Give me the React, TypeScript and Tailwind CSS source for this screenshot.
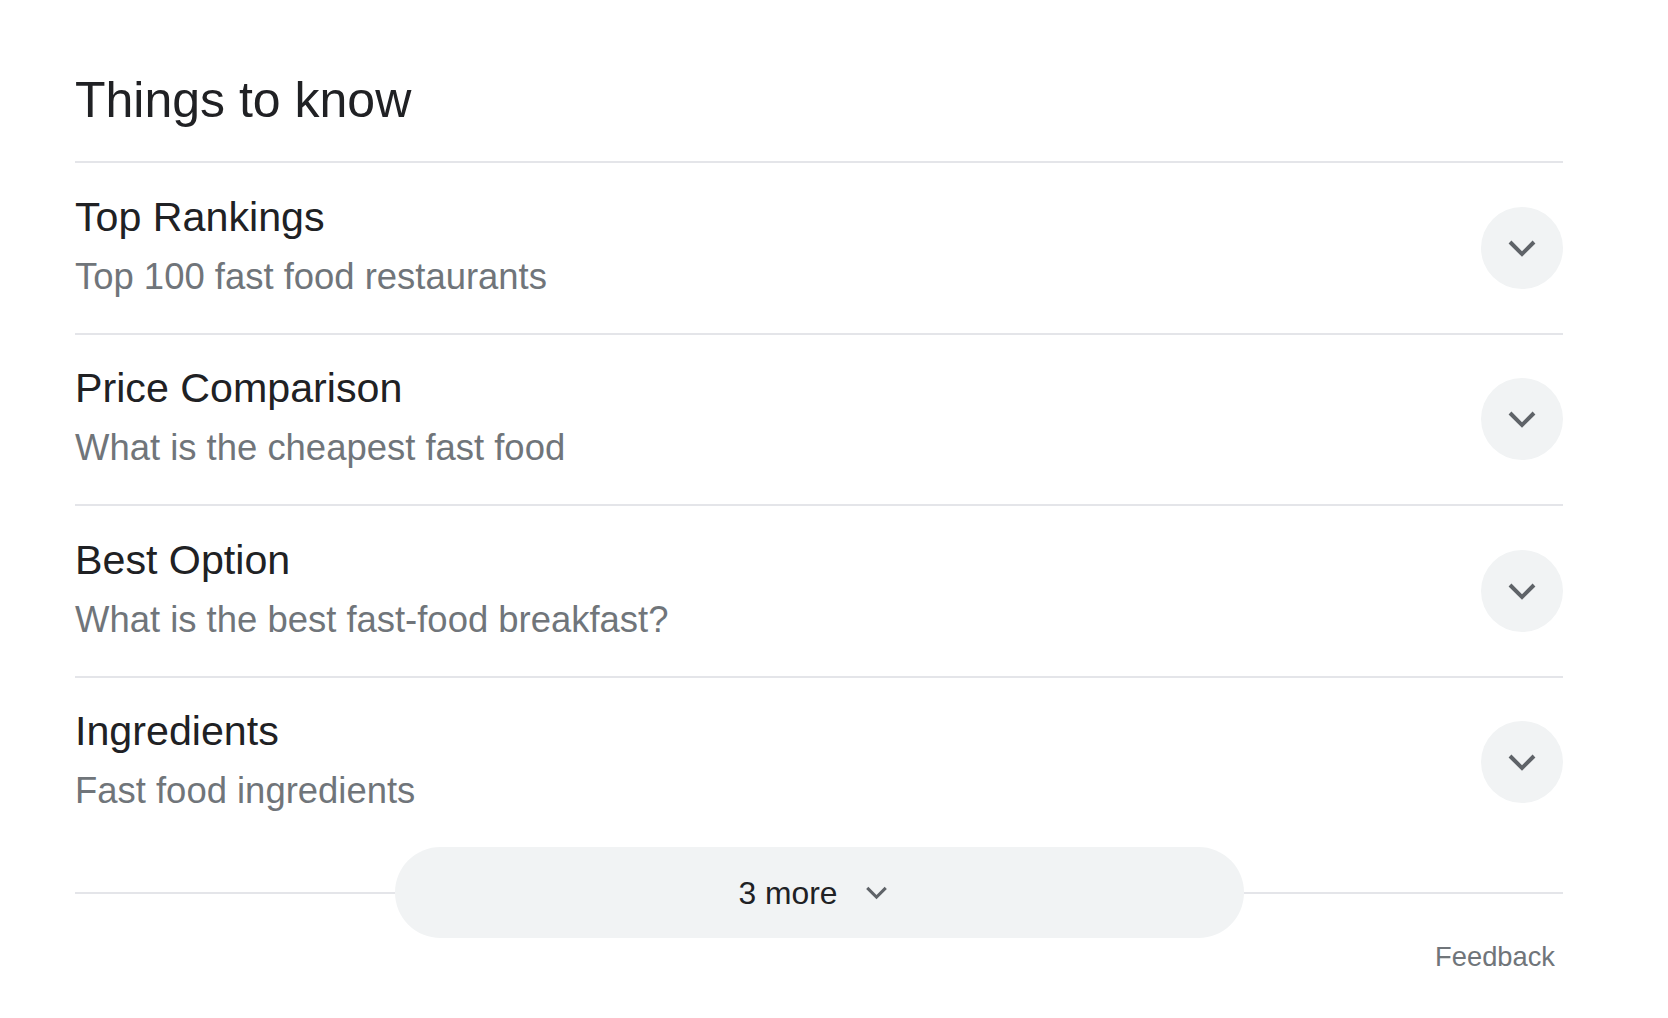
import { useState } from 'react';

interface Topic {
  title: string;
  subtitle: string;
}

const topics: Topic[] = [
  { title: 'Top Rankings', subtitle: 'Top 100 fast food restaurants' },
  { title: 'Price Comparison', subtitle: 'What is the cheapest fast food' },
  { title: 'Best Option', subtitle: 'What is the best fast-food breakfast?' },
  { title: 'Ingredients', subtitle: 'Fast food ingredients' },
];

function Chevron({ className }: { className: string }) {
  return (
    <svg xmlns="http://www.w3.org/2000/svg" viewBox="0 0 24 24" className={className} fill="currentColor">
      <path d="M12 16.41l-6.71-6.7 1.42-1.42 5.29 5.3 5.29-5.3 1.42 1.42z" />
    </svg>
  );
}

function TopicRow({ topic }: { topic: Topic }) {
  const [open, setOpen] = useState(false);
  return (
    <div className="flex h-[171.5px] items-center justify-between border-t-2 border-[#e4e5e9]">
      <div className="flex flex-col">
        <div className="mb-2 text-[41.2px] leading-[50px] text-[#202124]">{topic.title}</div>
        <div className="text-[36.45px] leading-[54px] text-[#70757a]">{topic.subtitle}</div>
      </div>
      <button
        type="button"
        onClick={() => setOpen(!open)}
        className="flex h-[82px] w-[82px] shrink-0 items-center justify-center rounded-full bg-[#f1f3f4] text-[#5f6368]"
      >
        <Chevron className={open ? 'h-12 w-12 rotate-180' : 'h-12 w-12'} />
      </button>
    </div>
  );
}

export default function App() {
  return (
    <div className="min-h-screen bg-white px-[75px] pt-[68px] font-['Liberation_Sans',Arial,sans-serif]">
      <div className="w-[1488px]">
        <h2 className="mb-[29px] text-[50px] leading-[64px] text-[#202124]">Things to know</h2>
        {topics.map((topic) => (
          <TopicRow key={topic.title} topic={topic} />
        ))}
        <div className="flex h-[91px] items-center">
          <div className="h-[2px] flex-1 bg-[#e4e5e9]" />
          <button
            type="button"
            className="flex h-[91px] w-[849px] items-center justify-center rounded-full bg-[#f1f3f4] pr-[4px] text-[#202124]"
          >
            <span className="text-[31.8px] leading-[40px]">3 more</span>
            <Chevron className="ml-[21px] h-[37px] w-[37px] text-[#5f6368]" />
          </button>
          <div className="h-[2px] flex-1 bg-[#e4e5e9]" />
        </div>
        <div className="mt-[1px] flex justify-end pr-2">
          <span className="text-[27.3px] leading-[36px] text-[#70757a]">Feedback</span>
        </div>
      </div>
    </div>
  );
}
